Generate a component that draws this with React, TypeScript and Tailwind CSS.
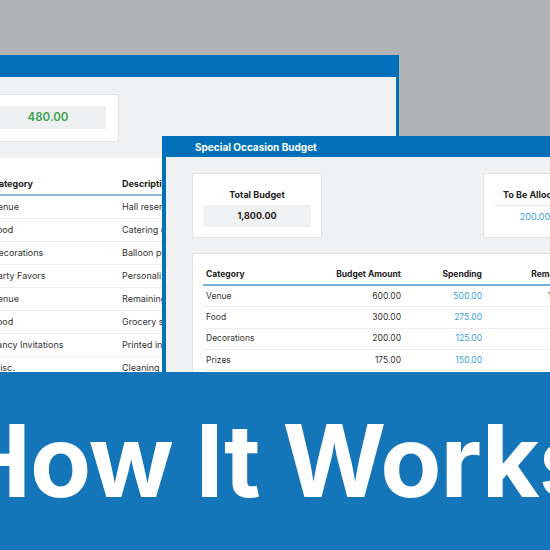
import React from "react";

const backRows = [
  ["Venue", "Hall reservation deposit"],
  ["Food", "Catering deposit"],
  ["Decorations", "Balloon purchase"],
  ["Party Favors", "Personalized gift bags"],
  ["Venue", "Remaining hall balance"],
  ["Food", "Grocery store run"],
  ["Fancy Invitations", "Printed invitations"],
  ["Misc.", "Cleaning supplies"],
];

const frontRows = [
  ["Venue", "600.00", "500.00", "100.00"],
  ["Food", "300.00", "275.00", "25.00"],
  ["Decorations", "200.00", "125.00", "75.00"],
  ["Prizes", "175.00", "150.00", "25.00"],
];

export default function App() {
  return (
    <div
      className="w-[550px] h-[550px] flex flex-col overflow-hidden bg-[#b2b3b5]"
      style={{ fontFamily: "Inter, 'Noto Sans', sans-serif" }}
    >
      <div className="relative h-[372px] shrink-0 overflow-hidden">
        {/* back window */}
        <div className="absolute left-[-50px] top-[55px] w-[449px] h-[340px] bg-[#0071b9] flex flex-col pl-[3px] pr-[3px]">
          <div className="h-[22px] shrink-0" />
          <div className="flex-1 bg-[#f0f1f3] pt-[17px] pl-[24px] flex flex-col">
            <div className="w-[142px] h-[48px] shrink-0 bg-white border border-[#e2e3e5] pt-[11px] px-[12px]">
              <div className="h-[23px] bg-[#eeeff1] flex items-center justify-center text-[11.5px] font-semibold text-[#3aa24c]">
                480.00
              </div>
            </div>
            <div className="mt-[16px] w-[420px] flex-1 bg-white pt-[16px] px-[15px] text-[9px] text-[#333]">
              <div className="h-[22px] flex items-center font-bold text-[#222] border-b-2 border-[#8dbbe2]">
                <div className="w-[130px] shrink-0">Category</div>
                <div>Description</div>
              </div>
              {backRows.map((r, i) => (
                <div key={i} className="h-[23px] flex items-center border-b border-[#eeeeef]">
                  <div className="w-[130px] shrink-0 whitespace-nowrap">{r[0]}</div>
                  <div className="whitespace-nowrap">{r[1]}</div>
                </div>
              ))}
            </div>
          </div>
        </div>

        {/* front window */}
        <div className="absolute left-[162px] top-[136px] w-[470px] h-[260px] bg-[#0071b9] flex flex-col">
          <div className="h-[21px] shrink-0 flex items-center pl-[33px] pt-[1px] text-white text-[10px] font-bold">
            Special Occasion Budget
          </div>
          <div className="flex-1 ml-[4px] bg-[#f0f1f3] pt-[16px] pl-[26px] flex flex-col">
            <div className="flex gap-[161px]">
              <div className="w-[130px] h-[65px] shrink-0 bg-white border border-[#e2e3e5] pt-[14px] px-[10px] flex flex-col items-center">
                <div className="h-[14px] leading-[14px] text-[9px] font-bold text-[#222]">Total Budget</div>
                <div className="mt-[3px] w-full h-[22px] bg-[#f0f1f3] flex items-center justify-center text-[9px] font-bold text-[#222]">
                  1,800.00
                </div>
              </div>
              <div className="w-[130px] h-[65px] shrink-0 bg-white border border-[#e2e3e5] pt-[14px] px-[10px] flex flex-col">
                <div className="h-[14px] leading-[14px] pl-[9px] text-[9px] font-bold text-[#222] whitespace-nowrap">To Be Allocated</div>
                <div className="mt-[3px] w-[82px] h-[22px] border-t border-[#e6e7e9] flex items-center justify-center text-[9px] text-[#3d9fe0]">
                  200.00
                </div>
              </div>
            </div>
            <div className="mt-[15px] w-[420px] flex-1 bg-white border border-[#e2e3e5] pt-[10px] px-[10px] text-[8.5px] text-[#333]">
              <div className="grid grid-cols-[97px_104px_81px_93px] h-[22px] items-center font-bold text-[#222] border-b-2 border-[#7aafdc]">
                <div className="pl-[3px]">Category</div>
                <div className="text-right pr-[3px]">Budget Amount</div>
                <div className="text-right pr-[3px]">Spending</div>
                <div className="text-right pr-[3px]">Remaining</div>
              </div>
              {frontRows.map((r, i) => (
                <div key={i} className="grid grid-cols-[97px_104px_81px_93px] h-[21.33px] items-center border-b border-[#ededee]">
                  <div className="pl-[3px]">{r[0]}</div>
                  <div className="text-right pr-[3px]">{r[1]}</div>
                  <div className="text-right pr-[3px] text-[#3d9fe0]">{r[2]}</div>
                  <div className="text-right pr-[3px]">{r[3]}</div>
                </div>
              ))}
            </div>
          </div>
        </div>
      </div>

      <div className="flex-1 bg-[#1475b8] flex items-center justify-center overflow-hidden">
        <div className="whitespace-nowrap text-white font-bold text-[100px] leading-none tracking-[-1px]">
          How It Works
        </div>
      </div>
    </div>
  );
}
